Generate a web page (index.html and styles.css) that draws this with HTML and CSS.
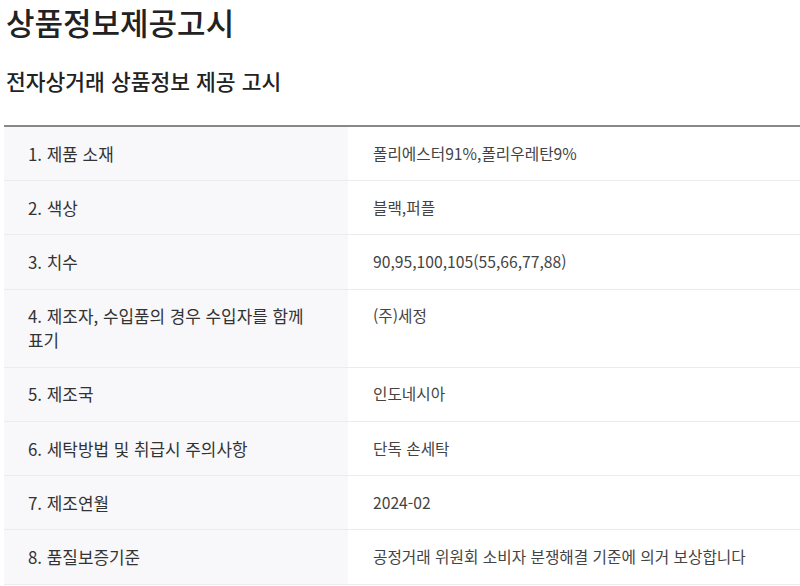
FILE: index.html
```html
<!DOCTYPE html>
<html lang="ko">
<head>
<meta charset="utf-8">
<title>상품정보제공고시</title>
<link rel="stylesheet" href="styles.css">
</head>
<body>
<div class="page">
  <h1 class="title">상품정보제공고시</h1>
  <h2 class="subtitle">전자상거래 상품정보 제공 고시</h2>
  <table class="info">
    <tbody>
      <tr><th>1. 제품 소재</th><td>폴리에스터91%,폴리우레탄9%</td></tr>
      <tr><th>2. 색상</th><td>블랙,퍼플</td></tr>
      <tr><th>3. 치수</th><td>90,95,100,105(55,66,77,88)</td></tr>
      <tr><th>4. 제조자, 수입품의 경우 수입자를 함께 표기</th><td>(주)세정</td></tr>
      <tr><th>5. 제조국</th><td>인도네시아</td></tr>
      <tr><th>6. 세탁방법 및 취급시 주의사항</th><td>단독 손세탁</td></tr>
      <tr><th>7. 제조연월</th><td>2024-02</td></tr>
      <tr><th>8. 품질보증기준</th><td>공정거래 위원회 소비자 분쟁해결 기준에 의거 보상합니다</td></tr>
    </tbody>
  </table>
</div>
</body>
</html>
```
FILE: styles.css
```css
html, body {
  margin: 0;
  padding: 0;
  background: #fff;
}
body {
  font-family: "Noto Sans CJK KR", "Noto Sans", sans-serif;
  color: #222;
}
.page {
  padding: 0 0 0 4px;
}
.title {
  margin: 0;
  padding: 1px 0 0 2px;
  font-size: 31px;
  line-height: 42px;
  font-weight: 500;
  color: #222;
}
.subtitle {
  margin: 23px 0 0;
  padding-left: 2px;
  font-size: 21.5px;
  line-height: 30px;
  font-weight: 500;
  color: #222;
}
.info {
  margin-top: 29px;
  width: 796px;
  border-collapse: collapse;
  border-top: 2px solid #888;
  line-height: 24px;
  word-break: keep-all;
}
.info th,
.info td {
  text-align: left;
  vertical-align: top;
  padding: 14.6px 24px;
  border-bottom: 1px solid #ececee;
  font-weight: 400;
}
.info th {
  width: 296px;
  background: #f8f8fa;
  color: #333;
  font-size: 16.9px;
}
.info td {
  color: #444;
  font-size: 15.7px;
  padding-left: 25px;
}
```
